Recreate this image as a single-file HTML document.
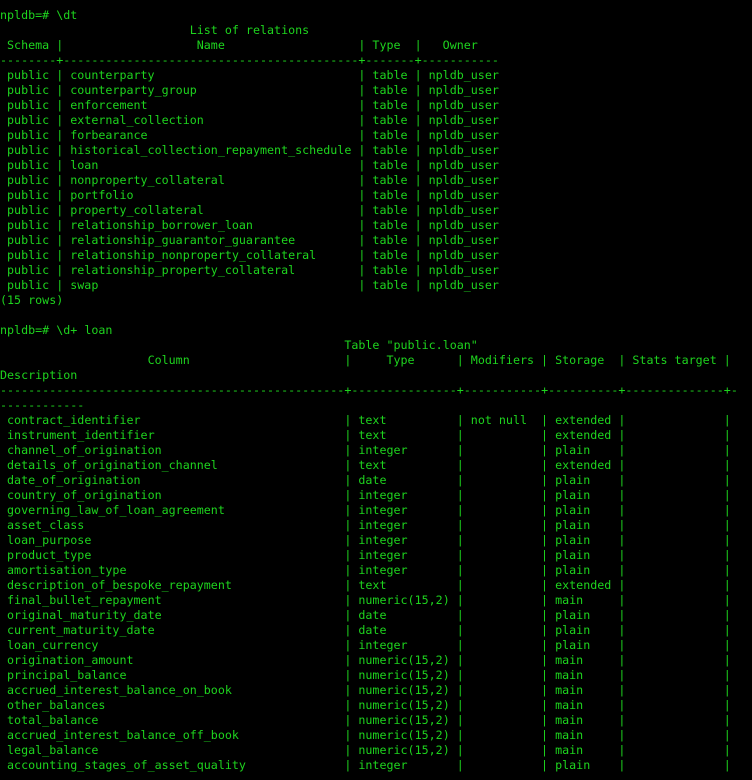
<!DOCTYPE html>
<html><head><meta charset="utf-8"><style>
html,body{margin:0;background:#000;width:752px;height:780px;overflow:hidden}
#t{font-family:"DejaVu Sans Mono","Liberation Mono",monospace;font-size:11.68px;line-height:15px;color:#1ed41e;padding-top:8px}
#t div{height:15px;white-space:pre}
i{font-style:normal;display:inline-block}
.a{width:8ch}.b{width:43ch}.c{width:8ch}
.A{width:49ch}.B{width:16ch}.C{width:12ch}.D{width:11ch}.E{width:15ch}
</style></head><body><div id="t"><div>npldb=# \dt</div><div><span style="padding-left:27ch">List of relations</span></div><div><i class="a"> Schema </i><i class="b">|                   Name</i><i class="c">| Type </i>|   Owner</div><div>--------+------------------------------------------+-------+-----------</div><div><i class="a"> public </i><i class="b">| counterparty</i><i class="c">| table </i>| npldb_user</div><div><i class="a"> public </i><i class="b">| counterparty_group</i><i class="c">| table </i>| npldb_user</div><div><i class="a"> public </i><i class="b">| enforcement</i><i class="c">| table </i>| npldb_user</div><div><i class="a"> public </i><i class="b">| external_collection</i><i class="c">| table </i>| npldb_user</div><div><i class="a"> public </i><i class="b">| forbearance</i><i class="c">| table </i>| npldb_user</div><div><i class="a"> public </i><i class="b">| historical_collection_repayment_schedule</i><i class="c">| table </i>| npldb_user</div><div><i class="a"> public </i><i class="b">| loan</i><i class="c">| table </i>| npldb_user</div><div><i class="a"> public </i><i class="b">| nonproperty_collateral</i><i class="c">| table </i>| npldb_user</div><div><i class="a"> public </i><i class="b">| portfolio</i><i class="c">| table </i>| npldb_user</div><div><i class="a"> public </i><i class="b">| property_collateral</i><i class="c">| table </i>| npldb_user</div><div><i class="a"> public </i><i class="b">| relationship_borrower_loan</i><i class="c">| table </i>| npldb_user</div><div><i class="a"> public </i><i class="b">| relationship_guarantor_guarantee</i><i class="c">| table </i>| npldb_user</div><div><i class="a"> public </i><i class="b">| relationship_nonproperty_collateral</i><i class="c">| table </i>| npldb_user</div><div><i class="a"> public </i><i class="b">| relationship_property_collateral</i><i class="c">| table </i>| npldb_user</div><div><i class="a"> public </i><i class="b">| swap</i><i class="c">| table </i>| npldb_user</div><div>(15 rows)</div><div></div><div>npldb=# \d+ loan</div><div><span style="padding-left:49ch">Table "public.loan"</span></div><div><i class="A"><span style="padding-left:21ch">Column</span></i><i class="B">|     Type</i><i class="C">| Modifiers</i><i class="D">| Storage</i><i class="E">| Stats target</i>|</div><div>Description</div><div>-------------------------------------------------+---------------+-----------+----------+--------------+-</div><div>------------</div><div><i class="A"> contract_identifier</i><i class="B">| text</i><i class="C">| not null</i><i class="D">| extended</i><i class="E">|</i>|</div><div><i class="A"> instrument_identifier</i><i class="B">| text</i><i class="C">|</i><i class="D">| extended</i><i class="E">|</i>|</div><div><i class="A"> channel_of_origination</i><i class="B">| integer</i><i class="C">|</i><i class="D">| plain</i><i class="E">|</i>|</div><div><i class="A"> details_of_origination_channel</i><i class="B">| text</i><i class="C">|</i><i class="D">| extended</i><i class="E">|</i>|</div><div><i class="A"> date_of_origination</i><i class="B">| date</i><i class="C">|</i><i class="D">| plain</i><i class="E">|</i>|</div><div><i class="A"> country_of_origination</i><i class="B">| integer</i><i class="C">|</i><i class="D">| plain</i><i class="E">|</i>|</div><div><i class="A"> governing_law_of_loan_agreement</i><i class="B">| integer</i><i class="C">|</i><i class="D">| plain</i><i class="E">|</i>|</div><div><i class="A"> asset_class</i><i class="B">| integer</i><i class="C">|</i><i class="D">| plain</i><i class="E">|</i>|</div><div><i class="A"> loan_purpose</i><i class="B">| integer</i><i class="C">|</i><i class="D">| plain</i><i class="E">|</i>|</div><div><i class="A"> product_type</i><i class="B">| integer</i><i class="C">|</i><i class="D">| plain</i><i class="E">|</i>|</div><div><i class="A"> amortisation_type</i><i class="B">| integer</i><i class="C">|</i><i class="D">| plain</i><i class="E">|</i>|</div><div><i class="A"> description_of_bespoke_repayment</i><i class="B">| text</i><i class="C">|</i><i class="D">| extended</i><i class="E">|</i>|</div><div><i class="A"> final_bullet_repayment</i><i class="B">| numeric(15,2)</i><i class="C">|</i><i class="D">| main</i><i class="E">|</i>|</div><div><i class="A"> original_maturity_date</i><i class="B">| date</i><i class="C">|</i><i class="D">| plain</i><i class="E">|</i>|</div><div><i class="A"> current_maturity_date</i><i class="B">| date</i><i class="C">|</i><i class="D">| plain</i><i class="E">|</i>|</div><div><i class="A"> loan_currency</i><i class="B">| integer</i><i class="C">|</i><i class="D">| plain</i><i class="E">|</i>|</div><div><i class="A"> origination_amount</i><i class="B">| numeric(15,2)</i><i class="C">|</i><i class="D">| main</i><i class="E">|</i>|</div><div><i class="A"> principal_balance</i><i class="B">| numeric(15,2)</i><i class="C">|</i><i class="D">| main</i><i class="E">|</i>|</div><div><i class="A"> accrued_interest_balance_on_book</i><i class="B">| numeric(15,2)</i><i class="C">|</i><i class="D">| main</i><i class="E">|</i>|</div><div><i class="A"> other_balances</i><i class="B">| numeric(15,2)</i><i class="C">|</i><i class="D">| main</i><i class="E">|</i>|</div><div><i class="A"> total_balance</i><i class="B">| numeric(15,2)</i><i class="C">|</i><i class="D">| main</i><i class="E">|</i>|</div><div><i class="A"> accrued_interest_balance_off_book</i><i class="B">| numeric(15,2)</i><i class="C">|</i><i class="D">| main</i><i class="E">|</i>|</div><div><i class="A"> legal_balance</i><i class="B">| numeric(15,2)</i><i class="C">|</i><i class="D">| main</i><i class="E">|</i>|</div><div><i class="A"> accounting_stages_of_asset_quality</i><i class="B">| integer</i><i class="C">|</i><i class="D">| plain</i><i class="E">|</i>|</div></div></body></html>
